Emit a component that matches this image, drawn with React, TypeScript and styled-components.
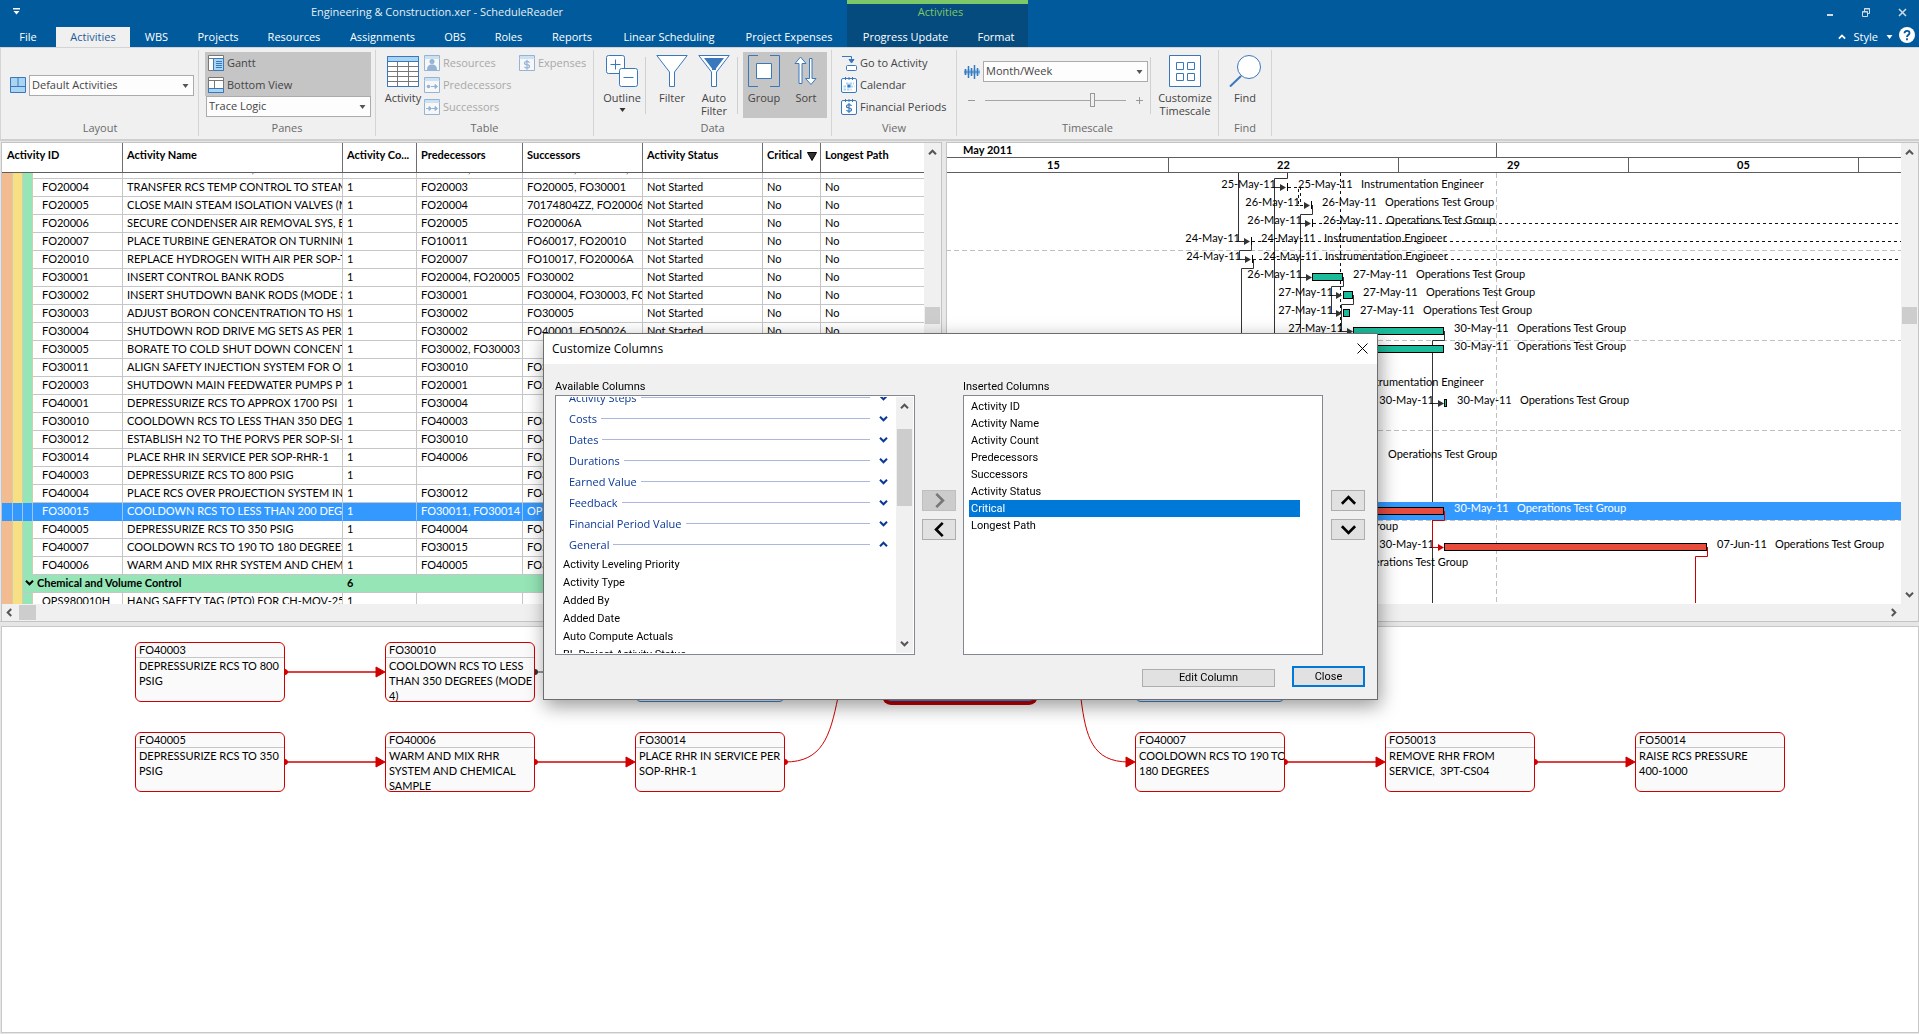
import React, { useLayoutEffect, useRef } from "react";
import styled, { createGlobalStyle, css } from "styled-components";

const uiFont = `"Open Sans", "Noto Sans", sans-serif`;
const gridFont = `Lato, "Liberation Sans", sans-serif`;
const dialogFont = `Roboto, "Noto Sans", sans-serif`;

const GlobalStyle = createGlobalStyle`
  *, *::before, *::after { box-sizing: border-box; }
  html, body, #root { height: 100%; }
  body { margin: 0; overflow: hidden; background: #e6e6e6; font: 12px/16px ${uiFont}; color: #444; }
  button, select, input { font: inherit; color: inherit; margin: 0; }
  button { padding: 0; border: 0; background: none; cursor: default; }
  svg { display: block; flex: none; }
  ul { margin: 0; padding: 0; list-style: none; }
`;

const Window = styled.div`
  display: flex;
  flex-direction: column;
  height: 100vh;
  min-height: 800px;
`;

/* ---------- title bar and tabs ---------- */

const TopBar = styled.header`
  display: flex;
  background: #005a9b;
  color: #fff;
  font-size: 11px;
  height: 47px;
  flex: none;
`;

const TopMain = styled.div`
  display: flex;
  flex-direction: column;
  width: 847px;
`;

const TitleLine = styled.div`
  display: flex;
  align-items: center;
  height: 27px;
  padding: 0 12px 4px;
  color: #e4eef6;
`;

const WindowTitle = styled.h1`
  flex: 1;
  margin: 0;
  padding-left: 18px;
  text-align: center;
  font-size: 11px;
  font-weight: 400;
`;

const TabLine = styled.nav`
  display: flex;
  height: 20px;
`;

const Tab = styled.button<{ $w: number; $active?: boolean }>`
  width: ${(p) => p.$w}px;
  height: 20px;
  line-height: 20px;
  text-align: center;
  white-space: nowrap;
  color: ${(p) => (p.$active ? "#1e5c99" : "#fff")};
  background: ${(p) => (p.$active ? "#f0f0f0" : "transparent")};
`;

const ContextTabs = styled.div`
  width: 181px;
  background: #064b7e;
  border-top: 4px solid #7dc868;
`;

const ContextTitle = styled.div`
  height: 23px;
  padding-left: 6px;
  text-align: center;
  color: #7dc868;
`;

const TopRight = styled.div`
  margin-left: auto;
  display: flex;
  flex-direction: column;
  align-items: flex-end;
`;

const WindowButtons = styled.div`
  display: flex;
  gap: 20px;
  padding: 4px 9px 0 0;
  height: 27px;
  button { width: 16px; height: 16px; }
`;

const StyleLine = styled.div`
  display: flex;
  gap: 6px;
  padding-right: 4px;
  button { display: flex; align-items: center; height: 20px; gap: 8px; }
  button:last-child { height: 16px; }
`;

/* ---------- ribbon ---------- */

const Ribbon = styled.section`
  display: flex;
  flex: none;
  height: 94px;
  padding: 2px 0 3px 1px;
  background: #f0f0f0;
  border: 1px solid #d4d4d4;
  border-bottom: 2px solid #cfcfcf;
  border-right: 0;
`;

const Group = styled.div<{ $w: number }>`
  display: flex;
  flex-direction: column;
  width: ${(p) => p.$w}px;
  border-right: 1px solid #d4d4d4;
`;

const GroupBody = styled.div<{ $pad: number; $center?: boolean }>`
  display: flex;
  flex: 1;
  align-items: ${(p) => (p.$center ? "center" : "flex-start")};
  padding: ${(p) => (p.$center ? 0 : 2)}px 0 0 ${(p) => p.$pad}px;
`;

const GroupLabel = styled.div`
  height: 16px;
  line-height: 16px;
  text-align: center;
  font-size: 11px;
  color: #6a6a6a;
`;

const SmallStack = styled.div<{ $w?: number }>`
  display: flex;
  flex-direction: column;
  width: ${(p) => (p.$w ? p.$w + "px" : "auto")};
`;

const SmallButton = styled.button<{ $pressed?: boolean }>`
  display: flex;
  align-items: center;
  gap: 3px;
  height: 22px;
  padding-left: ${(p) => (p.$pressed ? 3 : 0)}px;
  font-size: 11px;
  white-space: nowrap;
  background: ${(p) => (p.$pressed ? "#c5c5c5" : "transparent")};
  &:disabled { color: #a8a8a8; }
  &:disabled svg { opacity: 0.5; }
`;

const BigButton = styled.button<{ $w: number; $pressed?: boolean }>`
  display: flex;
  flex-direction: column;
  align-items: center;
  gap: 4px;
  width: ${(p) => p.$w}px;
  height: 66px;
  padding-top: 3px;
  font-size: 11px;
  line-height: 13px;
  background: ${(p) => (p.$pressed ? "#c5c5c5" : "transparent")};
`;

const Divider = styled.div`
  width: 1px;
  height: 57px;
  margin: 5px 5px 0 2px;
  background: #d0d0d0;
`;

const SelectBox = styled.label`
  position: relative;
  width: 165px;
  height: 21px;
  margin-left: auto;
  select {
    appearance: none;
    width: 100%;
    height: 100%;
    padding: 0 18px 1px 2px;
    border: 1px solid #ababab;
    border-radius: 0;
    background: #fdfdfd;
    font-size: 11px;
  }
  svg { position: absolute; right: 5px; top: 9px; }
`;

const PickRow = styled.div`
  display: flex;
  align-items: center;
  width: 184px;
`;

const ScaleStack = styled.div`
  width: 184px;
  padding-top: 9px;
`;

const SliderRow = styled.div`
  display: flex;
  align-items: center;
  gap: 10px;
  padding: 11px 0 0 4px;
  color: #999;
  input {
    appearance: none;
    width: 141px;
    height: 14px;
    background: linear-gradient(#a6a6a6, #a6a6a6) center / 100% 1px no-repeat;
  }
  input::-webkit-slider-thumb {
    appearance: none;
    width: 5px;
    height: 14px;
    border: 1px solid #999;
    background: #f0f0f0;
  }
`;

/* ---------- grid and chart panes ---------- */

const Panes = styled.main`
  display: flex;
  flex: none;
  height: 480px;
  margin-top: 1px;
  padding-left: 1px;
  border-bottom: 1px solid #c4c4c4;
`;

const Pane = styled.section<{ $w?: number }>`
  display: flex;
  flex-direction: column;
  flex: ${(p) => (p.$w ? "none" : "1")};
  width: ${(p) => (p.$w ? p.$w + "px" : "auto")};
  min-width: 0;
  border: 1px solid #c4c4c4;
  border-bottom: 0;
  background: #f0f0f0;
  font-family: ${gridFont};
  font-size: 11px;
  color: #000;
`;

const PaneRow = styled.div`
  display: flex;
  flex: none;
  height: 461px;
`;

const Splitter = styled.div`
  width: 4px;
  background: #e8e8e8;
`;

const TableView = styled.div`
  flex: 1;
  overflow: hidden;
  background: #fff;
  table { table-layout: fixed; border-collapse: separate; border-spacing: 0; width: 922px; }
`;

const HeadCell = styled.th`
  position: sticky;
  top: 0;
  z-index: 1;
  height: 30px;
  padding: 0 0 6px 4px;
  text-align: left;
  font-weight: 700;
  white-space: nowrap;
  overflow: hidden;
  text-overflow: ellipsis;
  background: #fff;
  border-right: 1px solid #6e6e6e;
  border-bottom: 1px solid #5e5e5e;
  &:first-child { padding-left: 5px; }
  &:last-child { border-right: 0; }
  svg { display: inline-block; margin: 0 0 -2px 5px; }
`;

const lineColor = "#c6c6c6";

const Band = styled.td<{ $c: string }>`
  height: 18px;
  padding: 0;
  background: ${(p) => p.$c};
  border-right: 1px solid #cfcfae;
`;

const Cell = styled.td<{ $indent?: boolean }>`
  height: 18px;
  padding: 0 0 2px ${(p) => (p.$indent ? 9 : 4)}px;
  line-height: 15px;
  white-space: nowrap;
  overflow: hidden;
  border-right: 1px solid ${lineColor};
  border-bottom: 1px solid ${lineColor};
  &:last-child { border-right: 0; }
`;

const Row = styled.tr<{ $selected?: boolean }>`
  ${(p) =>
    p.$selected &&
    css`
      color: #fff;
      td { background: #3399ff; border-bottom-color: #3399ff; border-right-color: #9cc8f2; }
    `}
`;

const GroupCell = styled.td`
  height: 18px;
  padding: 0 0 2px 4px;
  line-height: 15px;
  font-weight: 700;
  background: #96e5b7;
  border-bottom: 1px solid ${lineColor};
  div { display: flex; align-items: center; gap: 3px; margin-left: -2px; }
`;

const ScrollV = styled.div`
  display: flex;
  flex-direction: column;
  justify-content: space-between;
  align-items: center;
  position: relative;
  width: 17px;
  padding: 5px 1px 5px 0;
  background: #f0f0f0;
`;

const ThumbV = styled.div<{ $top: number; $h: number }>`
  position: absolute;
  left: 1px;
  right: 1px;
  top: ${(p) => p.$top}px;
  height: ${(p) => p.$h}px;
  background: #cdcdcd;
`;

const ScrollH = styled.div`
  display: flex;
  flex: none;
  align-items: center;
  gap: 5px;
  height: 16px;
  padding: 0 20px 0 3px;
  i { width: 17px; height: 15px; margin-right: auto; background: #cdcdcd; }
`;

const ChartView = styled.div`
  display: flex;
  flex-direction: column;
  flex: 1;
  min-width: 0;
  background: #fff;
  overflow: hidden;
`;

const MonthRow = styled.div`
  display: flex;
  flex: none;
  height: 15px;
  font-weight: 700;
  line-height: 13px;
  border-bottom: 1px solid #5e5e5e;
  span { flex: none; width: 550px; padding-left: 16px; border-right: 1px solid #5e5e5e; }
`;

const WeekRow = styled(MonthRow)`
  margin-left: -8px;
  span { width: 230px; padding: 0; text-align: center; }
`;

/* ---------- network view ---------- */

const Network = styled.section`
  position: relative;
  flex: 1;
  margin: 4px 0 1px 1px;
  background: #fff;
  border: 1px solid #c8c8c8;
  overflow: hidden;
  font-family: ${gridFont};
  font-size: 11px;
  color: #000;
`;

const Node = styled.article<{ $x: number; $y: number; $tone: "red" | "blue" | "current" }>`
  position: absolute;
  left: ${(p) => p.$x}px;
  top: ${(p) => p.$y}px;
  width: 150px;
  height: 60px;
  overflow: hidden;
  border: 1px solid ${(p) => (p.$tone === "blue" ? "#3a87dc" : "#d00000")};
  border-radius: 6px;
  background: ${(p) => (p.$tone === "current" ? "#3399ff" : "#fafafa")};
  box-shadow: ${(p) => (p.$tone === "current" ? "0 0 0 3px #c00000" : "none")};
  line-height: 15px;
  h3 { margin: 0; height: 15px; padding-left: 3px; font: inherit; line-height: 14px; border-bottom: 1px solid #c6c6c6; }
  p { margin: 0; padding-left: 3px; white-space: pre; }
`;

/* ---------- dialog ---------- */

const Dialog = styled.div`
  position: absolute;
  left: 543px;
  top: 333px;
  width: 835px;
  display: flex;
  flex-direction: column;
  border: 1px solid #6d6d6d;
  background: #f0f0f0;
  box-shadow: 2px 6px 18px rgba(0, 0, 0, 0.4);
  font-family: ${dialogFont};
  font-size: 11px;
  color: #000;
  z-index: 5;
`;

const DialogTitle = styled.div`
  display: flex;
  align-items: center;
  justify-content: space-between;
  height: 30px;
  padding: 0 9px 0 8px;
  background: #fff;
  h2 { margin: 0; font: 400 12px/16px ${uiFont}; }
  button { margin-top: -2px; }
`;

const DialogBody = styled.div`
  display: flex;
  padding: 14px 12px 0 11px;
`;

const ListColumn = styled.div`
  width: 360px;
  h3 { margin: 0; height: 17px; font: inherit; line-height: 17px; }
`;

const ListFrame = styled.div`
  display: flex;
  height: 260px;
  border: 1px solid #828790;
  padding: 1px;
  background: #fff;
  overflow: hidden;
`;

const ClipBox = styled.div`
  flex: 1;
  height: 256px;
  overflow: hidden;
`;

const GroupList = styled.div`
  display: flex;
  flex-direction: column;
  margin-top: -10px;
`;

const CategoryRow = styled.button`
  display: flex;
  align-items: center;
  gap: 4px;
  flex: none;
  height: 21px;
  padding: 0 8px 0 12px;
  color: #0a3896;
  font: 400 11px/20px ${uiFont};
  i { flex: 1; height: 1px; margin-right: 5px; background: #a9b8dd; }
`;

const FieldItem = styled.div`
  flex: none;
  height: 18px;
  padding-left: 6px;
  line-height: 20px;
`;

const Inserted = styled.ul`
  padding: 1px 21px 0 4px;
  flex: 1;
  li { height: 17px; padding-left: 2px; line-height: 17px; }
  li[aria-selected="true"] { background: #0078d7; color: #fff; }
`;

const MoveButtons = styled.div`
  display: flex;
  flex-direction: column;
  gap: 8px;
  padding: 112px 7px 0 7px;
  &:last-child { padding: 112px 0 0 8px; }
`;

const PushButton = styled.button<{ $w: number; $default?: boolean }>`
  display: flex;
  align-items: center;
  justify-content: center;
  width: ${(p) => p.$w}px;
  height: 21px;
  background: #e1e1e1;
  border: ${(p) => (p.$default ? "2px solid #0078d7" : "1px solid #adadad")};
  &:disabled { background: #cccccc; border-color: #bfbfbf; color: #777; }
`;

const DialogFooter = styled.div`
  display: flex;
  justify-content: flex-end;
  align-items: flex-end;
  gap: 17px;
  padding: 11px 12px 12px;
  ${PushButton}:first-child { height: 18px; }
`;

/* ---------- icons ---------- */

const B = "#3a78bd";
const L = "#a9d5f2";

const Icon = ({ s = 16, w, children }: { s?: number; w?: number; children: React.ReactNode }) => (
  <svg width={w ?? s} height={s} viewBox={`0 0 ${w ?? s} ${s}`} fill="none" stroke={B} aria-hidden="true">
    {children}
  </svg>
);

const Caret = ({ c = "#555" }: { c?: string }) => (
  <svg width="7" height="4" viewBox="0 0 7 4" aria-hidden="true"><path d="M0.5 0h6L3.5 4z" fill={c} /></svg>
);

const turns = { up: 0, right: 90, down: 180, left: 270 };
const Chevron = ({ to, s = 9, c = "#555", w = 2 }: { to: keyof typeof turns; s?: number; c?: string; w?: number }) => (
  <svg width={s} height={s} viewBox="0 0 9 9" fill="none" stroke={c} strokeWidth={w} aria-hidden="true">
    <path d="M1 6.200L4.500 2.700 8 6.200" transform={`rotate(${turns[to]} 4.500 4.500)`} />
  </svg>
);

const LayoutIcon = () => (
  <Icon><path d="M.5.5h15v15H.5z" fill={L} /><path d="M8 .5v9M.5 9.500h15" /></Icon>
);
const GanttIcon = () => (
  <Icon>
    <path d="M.5.5h15v15H.5z" fill="#fff" stroke="#777" /><path d="M.5 3.500h15M5.500 3v12" stroke="#777" />
    <path d="M5.500 3.500h10v12h-10z" fill={L} /><path d="M8 6.500h6M8 8.500h6M8 10.500h6M8 12.500h6" />
  </Icon>
);
const BottomIcon = () => (
  <Icon>
    <path d="M.5.5h15v15H.5z" fill="#fff" stroke="#777" /><path d="M.5 3.500h15M6.500 3v8" stroke="#777" />
    <path d="M.5 11.500h15v4H.5z" fill={L} />
  </Icon>
);
const Sheet = ({ children }: { children: React.ReactNode }) => (
  <Icon><path d="M.5.5h15v15H.5z" fill="#fff" /><path d="M1 1h14v3H1z" fill={L} stroke="none" /><path d="M.5 3.500h15" stroke={L} />{children}</Icon>
);
const ResourceIcon = () => (
  <Sheet><circle cx="8" cy="6.500" r="2.500" fill={B} stroke="none" /><path d="M3 15c0-4 2-5.500 5-5.500s5 1.500 5 5.500z" fill={B} stroke="none" /></Sheet>
);
const PredIcon = () => (
  <Sheet><circle cx="4.500" cy="9.500" r="1.800" fill={B} stroke="none" /><path d="M7 9.500h6M11 7.500l2.500 2-2.500 2z" fill={B} /></Sheet>
);
const SuccIcon = () => (
  <Sheet><path d="M2 9.500h5M5 7.500l2.500 2-2.500 2zM8 9.500h5M11 7.500l2.500 2-2.500 2z" fill={B} /></Sheet>
);
const Dollar = ({ y = 9.5 }: { y?: number }) => (
  <path d={`M10.500 ${y - 2}c-.5-1-1.300-1.300-2.500-1.300-3.300 0-3.300 3 0 3.300 3.300.3 3.300 3.300 0 3.300-1.200 0-2-.3-2.500-1.300M8 ${y - 5}v10`} strokeWidth="1.200" />
);
const ExpenseIcon = () => <Sheet><Dollar y={9.7} /></Sheet>;
const TableIcon = () => (
  <Icon s={32}>
    <path d="M.5 1.500h31v30H.5z" fill="#fff" stroke="#777" />
    <path d="M.5 11.500h31M.5 16.500h31M.5 21.500h31M.5 26.500h31M10.500 7v24M21.500 7v24" stroke="#777" />
    <path d="M.5 1.500h31v5H.5z" fill={L} /><path d="M.5 1.500v30h31v-30" />
  </Icon>
);
const OutlineIcon = () => (
  <Icon s={32}>
    <rect x=".5" y=".5" width="18" height="18" rx="2" fill="#fff" /><path d="M9.500 4.500v10M4.500 9.500h10" />
    <rect x="13.500" y="13.500" width="18" height="18" rx="2" fill="#fff" /><path d="M17.500 22.500h10" />
  </Icon>
);
const FilterIcon = ({ auto }: { auto?: boolean }) => (
  <Icon s={32}>
    <path d="M.8.5h30.400L18.500 17v14.500h-5V17z" fill="#fff" />
    {auto && <path d="M6 3h20l-8 10.500V15h-4v-1.500z" fill={B} stroke="none" />}
  </Icon>
);
const GroupIcon = () => (
  <Icon s={32}><path d="M10 .5H.5v31H10M22 .5h9.500v31H22" /><path d="M8.500 8.500h15v15h-15z" fill="#fff" /></Icon>
);
const SortIcon = () => (
  <Icon s={32}>
    <path d="M10.500 2L5 8.500h4v20h3v-20h4z" fill="#fff" /><path d="M21 29.500L15.500 23.500h4V3.500h2.500v20h4z" fill="#fff" />
  </Icon>
);
const GotoIcon = () => (
  <Icon><path d="M1 1.500h9.500V7" /><path d="M8 4.500h5l-2.500 3.500z" fill={B} /><rect x="5.500" y="10.500" width="10" height="5" rx="1" fill="#fff" /></Icon>
);
const CalFrame = ({ children }: { children: React.ReactNode }) => (
  <Icon><rect x=".5" y="1.500" width="15" height="14" rx="1.500" fill="#fff" /><path d="M4.500 0v3M8 0v3M11.500 0v3" />{children}</Icon>
);
const CalendarIcon = () => (
  <CalFrame>
    <path d="M5 6.500h8M2.500 9.500h11M2.500 12.500h8" stroke={L} strokeWidth="2" strokeDasharray="2.500 1" />
    <path d="M6.500 7.500h3v3h-3z" fill={B} stroke="none" />
  </CalFrame>
);
const PeriodIcon = () => <CalFrame><Dollar y={9} /></CalFrame>;
const ScaleIcon = () => (
  <Icon><path d="M0 8h16" stroke={L} strokeWidth="5" /><path d="M1.500 5v6M4.500 2v12M7.500 4v8M10.500 1v14M13.500 4v8" strokeWidth="1.500" /><path d="M0 8h16" /></Icon>
);
const CustomizeIcon = () => (
  <Icon s={32}><path d="M.5.5h31v31H.5z" fill="#fff" /><path d="M7.500 7.500h7v7h-7zM18.500 7.500h7v7h-7zM7.500 18.500h7v7h-7zM18.500 18.500h7v7h-7z" /></Icon>
);
const FindIcon = () => (
  <Icon s={32}><path d="M12 21L1 31.500" strokeWidth="2" /><circle cx="20" cy="12" r="11.500" fill="#fff" /></Icon>
);

/* ---------- data ---------- */

const tabs: [string, number][] = [
  ["File", 56], ["Activities", 74], ["WBS", 53], ["Projects", 70], ["Resources", 82], ["Assignments", 95],
  ["OBS", 50], ["Roles", 57], ["Reports", 70], ["Linear Scheduling", 124], ["Project Expenses", 116],
];

const rows: string[][] = [
  ["FO20003", "REDUCE TURBINE LOAD, OPEN BREAKERS", "FO20001, FO20002", "FO20004, FO20007,"],
  ["FO20004", "TRANSFER RCS TEMP CONTROL TO STEAM", "FO20003", "FO20005, FO30001"],
  ["FO20005", "CLOSE MAIN STEAM ISOLATION VALVES (MSIV)", "FO20004", "70174804ZZ, FO20006,"],
  ["FO20006", "SECURE CONDENSER AIR REMOVAL SYS, BREAK", "FO20005", "FO20006A"],
  ["FO20007", "PLACE TURBINE GENERATOR ON TURNING", "FO10011", "FO60017, FO20010"],
  ["FO20010", "REPLACE HYDROGEN WITH AIR PER SOP-TG", "FO20007", "FO10017, FO20006A"],
  ["FO30001", "INSERT CONTROL BANK RODS", "FO20004, FO20005", "FO30002"],
  ["FO30002", "INSERT SHUTDOWN BANK RODS (MODE 3 ENTRY)", "FO30001", "FO30004, FO30003, FO30005"],
  ["FO30003", "ADJUST BORON CONCENTRATION TO HSD XENON", "FO30002", "FO30005"],
  ["FO30004", "SHUTDOWN ROD DRIVE MG SETS AS PER SOP", "FO30002", "FO40001, FO50026"],
  ["FO30005", "BORATE TO COLD SHUT DOWN CONCENTRATION", "FO30002, FO30003", ""],
  ["FO30011", "ALIGN SAFETY INJECTION SYSTEM FOR OPERATION", "FO30010", "FO30015"],
  ["FO20003", "SHUTDOWN MAIN FEEDWATER PUMPS PER SOP", "FO20001", "FO20004"],
  ["FO40001", "DEPRESSURIZE RCS TO APPROX 1700 PSI", "FO30004", ""],
  ["FO30010", "COOLDOWN RCS TO LESS THAN 350 DEGREES", "FO40003", "FO30011"],
  ["FO30012", "ESTABLISH N2 TO THE PORVS PER SOP-SI-1", "FO30010", "FO40004"],
  ["FO30014", "PLACE RHR IN SERVICE PER SOP-RHR-1", "FO40006", "FO30015"],
  ["FO40003", "DEPRESSURIZE RCS TO 800 PSIG", "", "FO30010"],
  ["FO40004", "PLACE RCS OVER PROJECTION SYSTEM IN SERVICE", "FO30012", "FO40005"],
  ["FO30015", "COOLDOWN RCS TO LESS THAN 200 DEGREES", "FO30011, FO30014", "OPS980010H"],
  ["FO40005", "DEPRESSURIZE RCS TO 350 PSIG", "FO40004", "FO40006"],
  ["FO40007", "COOLDOWN RCS TO 190 TO 180 DEGREES", "FO30015", "FO50013"],
  ["FO40006", "WARM AND MIX RHR SYSTEM AND CHEMICAL", "FO40005", "FO30014"],
];

const columns = [11, 10, 10, 90, 220, 74, 106, 120, 120, 58, 103];

type Bar = { row: number; start?: [string, number]; bar?: [number, number]; tick?: number; end?: [string, number]; who?: [string, number]; tone?: string };
const IE = "Instrumentation Engineer";
const OT = "Operations Test Group";
const bars: Bar[] = [
  { row: 0, start: ["25-May-11", 1276], tick: 1287, end: ["25-May-11", 1298], who: [IE, 1361] },
  { row: 1, start: ["26-May-11", 1300], tick: 1311, end: ["26-May-11", 1322], who: [OT, 1385] },
  { row: 2, start: ["26-May-11", 1302], tick: 1312, end: ["26-May-11", 1323], who: [OT, 1386] },
  { row: 3, start: ["24-May-11", 1240], tick: 1251, end: ["24-May-11", 1261], who: [IE, 1324] },
  { row: 4, start: ["24-May-11", 1241], tick: 1252, end: ["24-May-11", 1263], who: [IE, 1325] },
  { row: 5, start: ["26-May-11", 1302], bar: [1312, 1343], end: ["27-May-11", 1353], who: [OT, 1416] },
  { row: 6, start: ["27-May-11", 1333], bar: [1343, 1353], end: ["27-May-11", 1363], who: [OT, 1426] },
  { row: 7, start: ["27-May-11", 1333], bar: [1343, 1350], end: ["27-May-11", 1360], who: [OT, 1423] },
  { row: 8, start: ["27-May-11", 1343], bar: [1353, 1444], end: ["30-May-11", 1454], who: [OT, 1517] },
  { row: 9, bar: [1353, 1444], end: ["30-May-11", 1454], who: [OT, 1517] },
  { row: 11, who: [IE, 1361] },
  { row: 12, start: ["30-May-11", 1434], bar: [1444, 1447], end: ["30-May-11", 1457], who: [OT, 1520] },
  { row: 15, who: [OT, 1388] },
  { row: 18, bar: [1353, 1444], end: ["30-May-11", 1454], who: [OT, 1517], tone: "#e74c3c" },
  { row: 19, who: [OT, 1289] },
  { row: 20, start: ["30-May-11", 1434], bar: [1444, 1707], end: ["07-Jun-11", 1717], who: [OT, 1775], tone: "#e74c3c" },
  { row: 21, who: [OT, 1359] },
];

const links = [
  "M1287.500 173V178.500H1274.500V340", "M1274.500 187.500H1284", "M1238.500 173V241.500H1248",
  "M1312.500 205V214.500H1300.500V340", "M1300.500 223.500H1309", "M1300.500 277.500H1309",
  "M1251.500 241V250.500H1239.500V259.500H1250", "M1253.500 259V268.500H1241.500V340",
  "M1343.500 277V286.500H1331.500V313.500H1340", "M1331.500 295.500H1340",
  "M1353.500 295V304.500H1341.500V331.500H1350", "M1444.500 331V340.500H1432.500V603", "M1432.500 403.500H1442",
];
const dashed = [
  "M1288 187.500H1298.500V205.500H1306", "M1300.500 187V205", "M1340.500 173V340",
  "M1313 223.500H4000", "M1252 241.500H4000", "M1253 259.500H4000",
];
const arrows: [number, number, string][] = [
  [1286, 187, "#333"], [1310, 205, "#333"], [1311, 223, "#333"], [1250, 241, "#333"], [1251, 259, "#333"],
  [1312, 277, "#333"], [1342, 295, "#333"], [1342, 313, "#333"], [1353, 331, "#333"], [1444, 403, "#333"], [1444, 547, "#d00000"],
];

const CHART_X = 947;
const CHART_Y = 173;
const rowTop = (r: number) => 178 + r * 18;

const GanttText = styled.text<{ $light?: boolean }>`
  fill: ${(p) => (p.$light ? "#fff" : "#000")};
  stroke: none;
`;

const GanttChart = () => (
  <svg width="100%" height="431" aria-label="Gantt chart" role="img">
    <g transform={`translate(${-CHART_X} ${-CHART_Y})`} fill="none">
      <g stroke="#c0c0c0" strokeDasharray="5 3">
        {[250, 340, 430, 520].map((y) => <path key={y} d={`M946 ${y}.5H4000`} />)}
        <path d="M1496.500 173V603" />
      </g>
      <g stroke="#333">
        {links.map((d) => <path key={d} d={d} />)}
        <g strokeDasharray="3 3" stroke="#111">{dashed.map((d) => <path key={d} d={d} />)}</g>
      </g>
      <rect x="946" y="502" width="3000" height="18" fill="#3399ff" />
      {bars.map((b) => (
        <g key={b.row}>
          {b.bar && <rect x={b.bar[0] + 0.5} y={rowTop(b.row) + 5.5} width={b.bar[1] - b.bar[0] - 1} height="7" fill={b.tone ?? "#1abc9c"} stroke="#000" />}
          {b.tick && <path d={`M${b.tick}.5 ${rowTop(b.row) + 5}v8`} stroke="#000" />}
          {b.start && <GanttText x={b.start[1]} y={rowTop(b.row) + 10} textAnchor="end">{b.start[0]}</GanttText>}
          {b.end && <GanttText $light={b.row === 18} x={b.end[1]} y={rowTop(b.row) + 10}>{b.end[0]}</GanttText>}
          {b.who && <GanttText $light={b.row === 18} x={b.who[1]} y={rowTop(b.row) + 10}>{b.who[0]}</GanttText>}
        </g>
      ))}
      <g stroke="#d00000">
        <path d="M1444.500 511V520.500H1432.500V547.500H1442" /><path d="M1707.500 547V556.500H1695.500V603" />
      </g>
      {arrows.map(([x, y, c]) => <path key={`${x}-${y}`} d={`M${x} ${y + 0.5}l-6-3.500v7z`} fill={c} />)}
    </g>
  </svg>
);

const nodes: { x: number; y: number; id: string; name: string; tone: "red" | "blue" | "current" }[] = [
  { x: 0, y: 0, id: "FO40003", name: "DEPRESSURIZE RCS TO 800\nPSIG", tone: "red" },
  { x: 1, y: 0, id: "FO30010", name: "COOLDOWN RCS TO LESS\nTHAN 350 DEGREES (MODE\n4)", tone: "red" },
  { x: 2, y: 0, id: "FO30011", name: "", tone: "blue" },
  { x: 3, y: 0, id: "FO30015", name: "", tone: "current" },
  { x: 4, y: 0, id: "OPS980010H", name: "", tone: "blue" },
  { x: 0, y: 1, id: "FO40005", name: "DEPRESSURIZE RCS TO 350\nPSIG", tone: "red" },
  { x: 1, y: 1, id: "FO40006", name: "WARM AND MIX RHR\nSYSTEM AND CHEMICAL\nSAMPLE", tone: "red" },
  { x: 2, y: 1, id: "FO30014", name: "PLACE RHR IN SERVICE PER\nSOP-RHR-1", tone: "red" },
  { x: 4, y: 1, id: "FO40007", name: "COOLDOWN RCS TO 190 TO\n180 DEGREES", tone: "red" },
  { x: 5, y: 1, id: "FO50013", name: "REMOVE RHR FROM\nSERVICE,  3PT-CS04", tone: "red" },
  { x: 6, y: 1, id: "FO50014", name: "RAISE RCS PRESSURE\n400-1000", tone: "red" },
];

const NetworkLinks = () => (
  <svg width="100%" height="200" fill="none" aria-hidden="true">
    <g stroke="#d00000">
      {[[283, 45], [283, 135], [533, 135], [1283, 135], [1533, 135]].map(([x, y]) => (
        <g key={`${x}-${y}`}>
          <path d={`M${x} ${y}h92`} strokeWidth="1.500" />
          <path d={`M${x + 100} ${y}l-9-5v10z`} fill="#d00000" />
          <circle cx={x} cy={y} r="2.500" fill="#d00000" />
        </g>
      ))}
      <circle cx="783" cy="135" r="2.500" fill="#d00000" />
      <path d="M783 135C820 135 828 110 836 70S850 45 883 45M1033 45C1070 45 1075 50 1079 72C1084 110 1090 135 1127 135" />
      <path d="M1133 135l-9-5v10z" fill="#d00000" />
    </g>
    <path d="M533 45h92" stroke="#333" /><circle cx="533" cy="45" r="3" fill="#333" />
  </svg>
);

const categories = ["Activity Steps", "Costs", "Dates", "Durations", "Earned Value", "Feedback", "Financial Period Value", "General"];
const fields = ["Activity Leveling Priority", "Activity Type", "Added By", "Added Date", "Auto Compute Actuals", "BL Project Activity Status"];
const inserted = ["Activity ID", "Activity Name", "Activity Count", "Predecessors", "Successors", "Activity Status", "Critical", "Longest Path"];

const VerticalScroll = () => (
  <ScrollV><Chevron to="up" /><ThumbV $top={164} $h={17} /><Chevron to="down" /></ScrollV>
);

const Picker = ({ label, value }: { label: string; value: string }) => (
  <SelectBox><select aria-label={label} defaultValue={value}><option>{value}</option></select><Caret /></SelectBox>
);

const ScaleBlock = () => (
  <ScaleStack>
    <PickRow><ScaleIcon /><Picker label="Timescale" value="Month/Week" /></PickRow>
    <SliderRow>
      <svg width="7" height="7" stroke="currentColor"><path d="M0 3.500h7" /></svg>
      <input type="range" aria-label="Zoom" min={0} max={100} defaultValue={77} />
      <svg width="7" height="7" stroke="currentColor"><path d="M0 3.500h7M3.500 0v7" /></svg>
    </SliderRow>
  </ScaleStack>
);

const ActivityTable = () => {
  const view = useRef<HTMLDivElement>(null);
  useLayoutEffect(() => {
    if (view.current) view.current.scrollTop = 12;
  }, []);
  return (
    <TableView ref={view}>
      <table>
        <colgroup>{columns.map((w, i) => <col key={i} width={w} />)}</colgroup>
        <thead>
          <tr>
            <HeadCell colSpan={4}>Activity ID</HeadCell>
            <HeadCell>Activity Name</HeadCell>
            <HeadCell>Activity Co...</HeadCell>
            <HeadCell>Predecessors</HeadCell>
            <HeadCell>Successors</HeadCell>
            <HeadCell>Activity Status</HeadCell>
            <HeadCell>Critical<svg width="10" height="9" viewBox="0 0 10 9"><path d="M.5.5h9L5 8.500z" fill="#333" stroke="#000" /></svg></HeadCell>
            <HeadCell>Longest Path</HeadCell>
          </tr>
        </thead>
        <tbody>
          {rows.map(([id, name, pred, succ], i) => (
            <Row key={i} $selected={id === "FO30015"}>
              <Band $c="#f2bc90" /><Band $c="#f9df83" /><Band $c="#96e5b7" />
              <Cell $indent>{id}</Cell><Cell>{name}</Cell><Cell>1</Cell><Cell>{pred}</Cell><Cell>{succ}</Cell>
              <Cell>Not Started</Cell><Cell>No</Cell><Cell>No</Cell>
            </Row>
          ))}
          <tr>
            <Band $c="#f2bc90" /><Band $c="#f9df83" />
            <GroupCell colSpan={3}><div><Chevron to="down" c="#000" />Chemical and Volume Control</div></GroupCell>
            <GroupCell colSpan={6}>6</GroupCell>
          </tr>
          <Row>
            <Band $c="#f2bc90" /><Band $c="#f9df83" /><Band $c="#96e5b7" />
            <Cell $indent>OPS980010H</Cell><Cell>HANG SAFETY TAG (PTO) FOR CH-MOV-250A</Cell><Cell>1</Cell><Cell /><Cell /><Cell /><Cell /><Cell />
          </Row>
        </tbody>
      </table>
    </TableView>
  );
};

const ColumnsDialog = () => (
  <Dialog role="dialog" aria-label="Customize Columns">
    <DialogTitle>
      <h2>Customize Columns</h2>
      <button aria-label="Close dialog">
        <svg width="11" height="11" viewBox="0 0 11 11" stroke="#000"><path d="M.5.5l10 10M10.500.5l-10 10" /></svg>
      </button>
    </DialogTitle>
    <DialogBody>
      <ListColumn>
        <h3>Available Columns</h3>
        <ListFrame>
          <ClipBox>
            <GroupList>
              {categories.map((c) => (
                <CategoryRow key={c}>{c}<i /><Chevron to={c === "General" ? "up" : "down"} c="#0a3896" /></CategoryRow>
              ))}
              {fields.map((f) => <FieldItem key={f}>{f}</FieldItem>)}
            </GroupList>
          </ClipBox>
          <ScrollV><Chevron to="up" /><ThumbV $top={32} $h={77} /><Chevron to="down" /></ScrollV>
        </ListFrame>
      </ListColumn>
      <MoveButtons>
        <PushButton $w={34} disabled aria-label="Add column"><Chevron to="right" s={17} c="#777" w={1.4} /></PushButton>
        <PushButton $w={34} aria-label="Remove column"><Chevron to="left" s={17} c="#000" w={1.4} /></PushButton>
      </MoveButtons>
      <ListColumn>
        <h3>Inserted Columns</h3>
        <ListFrame>
          <Inserted role="listbox" aria-label="Inserted Columns">
            {inserted.map((c) => <li key={c} role="option" aria-selected={c === "Critical"}>{c}</li>)}
          </Inserted>
        </ListFrame>
      </ListColumn>
      <MoveButtons>
        <PushButton $w={34} aria-label="Move up"><Chevron to="up" s={17} c="#000" w={1.4} /></PushButton>
        <PushButton $w={34} aria-label="Move down"><Chevron to="down" s={17} c="#000" w={1.4} /></PushButton>
      </MoveButtons>
    </DialogBody>
    <DialogFooter>
      <PushButton $w={133}>Edit Column</PushButton>
      <PushButton $w={73} $default>Close</PushButton>
    </DialogFooter>
  </Dialog>
);

export default function App() {
  return (
    <Window>
      <GlobalStyle />
      <TopBar>
        <TopMain>
          <TitleLine>
            <svg width="9" height="7" viewBox="0 0 9 7" fill="#fff"><path d="M1 0h7v1.500H1zM1.500 3h6l-3 3.500z" /></svg>
            <WindowTitle>Engineering &amp; Construction.xer - ScheduleReader</WindowTitle>
          </TitleLine>
          <TabLine>
            {tabs.map(([name, w]) => <Tab key={name} $w={w} $active={name === "Activities"}>{name}</Tab>)}
          </TabLine>
        </TopMain>
        <ContextTabs>
          <ContextTitle>Activities</ContextTitle>
          <TabLine><Tab $w={117}>Progress Update</Tab><Tab $w={64}>Format</Tab></TabLine>
        </ContextTabs>
        <TopRight>
          <WindowButtons>
            <button aria-label="Minimize"><svg width="16" height="16"><path d="M5 10h6v2H5z" fill="#d0dde8" /></svg></button>
            <button aria-label="Restore">
              <svg width="16" height="16" fill="none" stroke="#d0dde8"><path d="M4.500 7.500h5v5h-5zM4 8h6M6.500 7V4.500h5v5H10M6 5h6" /></svg>
            </button>
            <button aria-label="Close"><svg width="16" height="16" stroke="#d0dde8" strokeWidth="1.500"><path d="M5 5l7 7M12 5l-7 7" /></svg></button>
          </WindowButtons>
          <StyleLine>
            <button><Chevron to="up" c="#fff" s={8} />Style<Caret c="#fff" /></button>
            <button aria-label="Help">
              <svg width="16" height="16" fill="none"><circle cx="8" cy="8" r="8" fill="#fff" /><path d="M5.500 6.300C5.500 3 10.500 3 10.500 6c0 2-2.500 2-2.500 4M8 11.300v2" stroke="#005a9b" strokeWidth="1.800" /></svg>
            </button>
          </StyleLine>
        </TopRight>
      </TopBar>

      <Ribbon>
        <Group $w={197}>
          <GroupBody $pad={8} $center>
            <PickRow><LayoutIcon /><Picker label="Layout" value="Default Activities" /></PickRow>
          </GroupBody>
          <GroupLabel>Layout</GroupLabel>
        </Group>
        <Group $w={177}>
          <GroupBody $pad={6}>
            <SmallStack $w={166}>
              <SmallButton $pressed><GanttIcon />Gantt</SmallButton>
              <SmallButton $pressed><BottomIcon />Bottom View</SmallButton>
              <Picker label="Bottom view" value="Trace Logic" />
            </SmallStack>
          </GroupBody>
          <GroupLabel>Panes</GroupLabel>
        </Group>
        <Group $w={218}>
          <GroupBody $pad={6}>
            <BigButton $w={42}><TableIcon />Activity</BigButton>
            <SmallStack $w={95}>
              <SmallButton disabled><ResourceIcon />Resources</SmallButton>
              <SmallButton disabled><PredIcon />Predecessors</SmallButton>
              <SmallButton disabled><SuccIcon />Successors</SmallButton>
            </SmallStack>
            <SmallButton disabled><ExpenseIcon />Expenses</SmallButton>
          </GroupBody>
          <GroupLabel>Table</GroupLabel>
        </Group>
        <Group $w={238}>
          <GroupBody $pad={7}>
            <BigButton $w={42}><OutlineIcon />Outline<Caret c="#333" /></BigButton>
            <Divider />
            <BigButton $w={42}><FilterIcon />Filter</BigButton>
            <BigButton $w={42}><FilterIcon auto /><span>Auto<br />Filter</span></BigButton>
            <Divider />
            <BigButton $w={42} $pressed><GroupIcon />Group</BigButton>
            <BigButton $w={42} $pressed><SortIcon />Sort</BigButton>
          </GroupBody>
          <GroupLabel>Data</GroupLabel>
        </Group>
        <Group $w={125}>
          <GroupBody $pad={9}>
            <SmallStack>
              <SmallButton><GotoIcon />Go to Activity</SmallButton>
              <SmallButton><CalendarIcon />Calendar</SmallButton>
              <SmallButton><PeriodIcon />Financial Periods</SmallButton>
            </SmallStack>
          </GroupBody>
          <GroupLabel>View</GroupLabel>
        </Group>
        <Group $w={262}>
          <GroupBody $pad={7}>
            <ScaleBlock />
            <Divider />
            <BigButton $w={58}><CustomizeIcon /><span>Customize<br />Timescale</span></BigButton>
          </GroupBody>
          <GroupLabel>Timescale</GroupLabel>
        </Group>
        <Group $w={53}>
          <GroupBody $pad={5}>
            <BigButton $w={42}><FindIcon />Find</BigButton>
          </GroupBody>
          <GroupLabel>Find</GroupLabel>
        </Group>
      </Ribbon>

      <Panes>
        <Pane $w={941}>
          <PaneRow><ActivityTable /><VerticalScroll /></PaneRow>
          <ScrollH><Chevron to="left" /><i /></ScrollH>
        </Pane>
        <Splitter />
        <Pane>
          <PaneRow>
            <ChartView>
              <MonthRow><span>May 2011</span></MonthRow>
              <WeekRow><span>15</span><span>22</span><span>29</span><span>05</span><span /></WeekRow>
              <GanttChart />
            </ChartView>
            <VerticalScroll />
          </PaneRow>
          <ScrollH><Chevron to="left" /><i /><Chevron to="right" /></ScrollH>
        </Pane>
      </Panes>

      <Network>
        <NetworkLinks />
        {nodes.map((n) => (
          <Node key={n.id} $x={133 + n.x * 250} $y={15 + n.y * 90} $tone={n.tone}><h3>{n.id}</h3><p>{n.name}</p></Node>
        ))}
      </Network>

      <ColumnsDialog />
    </Window>
  );
}
